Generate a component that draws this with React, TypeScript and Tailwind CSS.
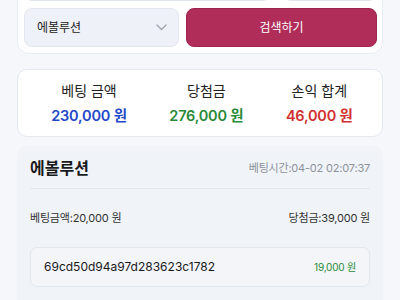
import React from "react";

export default function App() {
  return (
    <div
      className="w-[400px] h-[300px] overflow-hidden bg-[#f6f7fa] px-[17px]"
      style={{ fontFamily: 'Inter, "Noto Sans CJK KR", "Noto Sans", sans-serif' }}
    >
      {/* Top search card (scrolled partially out of view) */}
      <div className="-mt-[40px] rounded-[12px] border border-[#e8ebf0] bg-white p-[6px] pr-[5px]">
        <div className="flex gap-[12px] h-[34px]">
          <div className="flex-1 rounded-[8px] border border-[#e2e6ee] bg-[#f3f5f9]" />
          <div className="w-[94px] rounded-[8px] border border-[#e2e6ee] bg-[#f3f5f9]" />
        </div>
        <div className="mt-[7px] flex gap-[7px]">
          <div className="flex h-[39px] w-[155px] items-center justify-between rounded-[8px] border border-[#e2e6ee] bg-[#eef1f7] pl-[12px] pr-[11px]">
            <span className="text-[12px] text-[#222]">에볼루션</span>
            <svg width="11" height="7" viewBox="0 0 11 7" fill="none">
              <path d="M1 1l4.5 4.5L10 1" stroke="#9aa0aa" strokeWidth="1.2" strokeLinecap="round" strokeLinejoin="round" />
            </svg>
          </div>
          <button className="flex h-[39px] flex-1 items-center justify-center rounded-[8px] border border-[#9e2450] bg-[#b02d5a] text-[12px] text-white">
            검색하기
          </button>
        </div>
      </div>

      {/* Stats card */}
      <div className="mt-[15px] flex h-[68px] items-center justify-around rounded-[10px] border border-[#e5e8ee] bg-white pl-[12px] pr-[8px]">
        <div className="flex flex-col items-center">
          <span className="text-[14px] leading-[20px] text-[#222]">베팅 금액</span>
          <span className="mt-[5px] text-[14.5px] font-semibold leading-[20px] tracking-[-0.2px] text-[#1f48c9]">230,000 원</span>
        </div>
        <div className="flex flex-col items-center">
          <span className="text-[14px] leading-[20px] text-[#222]">당첨금</span>
          <span className="mt-[5px] text-[14.5px] font-semibold leading-[20px] tracking-[-0.2px] text-[#2a8a38]">276,000 원</span>
        </div>
        <div className="flex flex-col items-center">
          <span className="text-[14px] leading-[20px] text-[#222]">손익 합계</span>
          <span className="mt-[5px] text-[14.5px] font-semibold leading-[20px] tracking-[-0.2px] text-[#d0302f]">46,000 원</span>
        </div>
      </div>

      {/* Bet detail card */}
      <div className="mt-[9px] rounded-t-[10px] bg-[#f0f3f8] px-[13px] pt-[12px] pb-[20px]">
        <div className="flex items-center justify-between">
          <span className="text-[16px] font-semibold leading-[20px] text-[#1a1a1a]">에볼루션</span>
          <span className="text-[11px] tracking-[-0.2px] text-[#8d929b]">베팅시간:04-02 02:07:37</span>
        </div>
        <div className="mt-[10px] border-t border-[#e3e7ee]" />
        <div className="mt-[21px] flex items-center justify-between text-[11px] leading-[16px] tracking-[-0.2px] text-[#333]">
          <span>베팅금액:20,000 원</span>
          <span>당첨금:39,000 원</span>
        </div>
        <div className="mt-[21px] flex h-[40px] items-center justify-between rounded-[7px] border border-[#e2e6ee] bg-[#f3f5f9] px-[13px]">
          <span className="text-[12px] text-[#1a1a1a]">69cd50d94a97d283623c1782</span>
          <span className="text-[10px] tracking-[-0.2px] text-[#2a8a38]">19,000 원</span>
        </div>
      </div>
    </div>
  );
}
